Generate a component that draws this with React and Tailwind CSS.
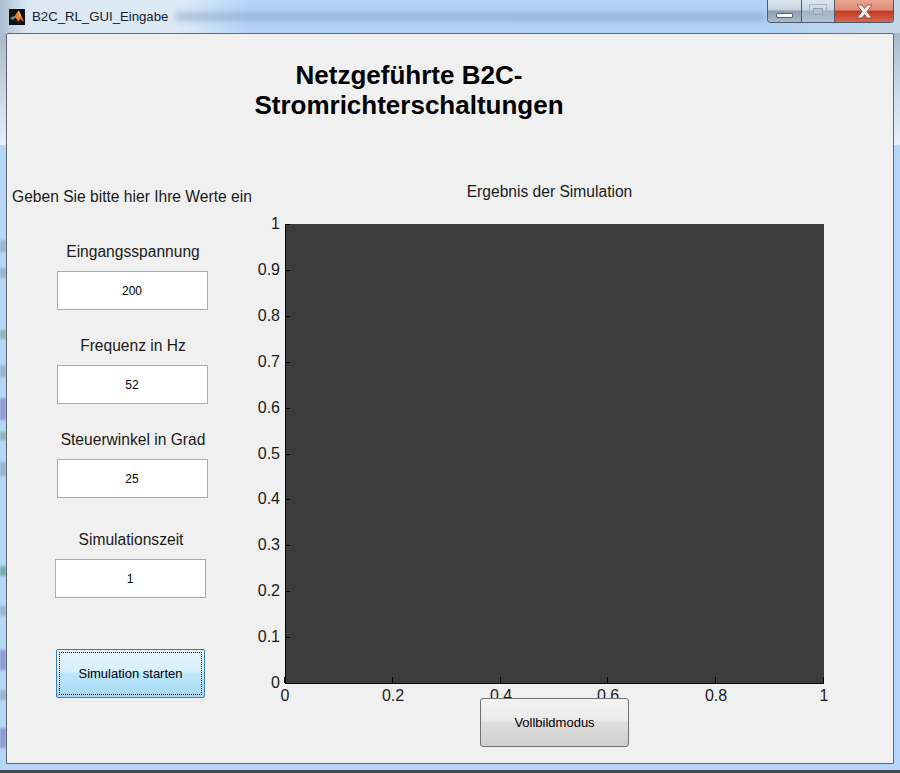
const yTicks = ["1", "0.9", "0.8", "0.7", "0.6", "0.5", "0.4", "0.3", "0.2", "0.1", "0"];
const xTicks = ["0", "0.2", "0.4", "0.6", "0.8", "1"];

// plot box inside the svg
const plotX = 33;
const plotY = 10;
const plotW = 539;
const plotH = 459;

// blurred desktop showing through the left window edge
const smudges = [
  { y: 240, h: 12, color: "#8fa7bd" },
  { y: 268, h: 10, color: "#8fa7bd" },
  { y: 330, h: 9, color: "#7fa59d" },
  { y: 365, h: 12, color: "#8fa7bd" },
  { y: 398, h: 22, color: "#7d80c4" },
  { y: 432, h: 8, color: "#7fa59d" },
  { y: 462, h: 14, color: "#8fa7bd" },
  { y: 566, h: 10, color: "#5f9a8c" },
  { y: 606, h: 10, color: "#8fa7bd" },
  { y: 650, h: 20, color: "#7d80c4" },
  { y: 690, h: 10, color: "#8fa7bd" },
  { y: 728, h: 20, color: "#7d80c4" },
];

const Field = ({ label, value, className }) => (
  <div className={`flex flex-col items-center ${className}`}>
    <div className="mt-[1px] pl-[2px] h-[22px] text-[15.6px] leading-[22px] text-[#1a1a1a] whitespace-nowrap">{label}</div>
    <div className="mt-[8px] w-[151px] h-[39px] bg-white border border-[#ababab] flex items-center justify-center text-[12px] text-black">
      {value}
    </div>
  </div>
);

const Chart = () => (
  <svg width="600" height="499" className="block" style={{ fontFamily: '"Liberation Sans", Arial, sans-serif' }}>
    <rect x={plotX} y={plotY} width={plotW} height={plotH} fill="#3c3c3c" />
    <path d={`M${plotX + 0.5} ${plotY}V${plotY + plotH + 0.5}H${plotX + plotW}`} fill="none" stroke="#000" />
    {yTicks.map((t, i) => {
      const y = Math.round(plotY + (plotH * i) / 10);
      return (
        <g key={t}>
          <path d={`M${plotX} ${y + 0.5}h5`} stroke="#000" />
          <text x={plotX - 5} y={y + 5} textAnchor="end" fontSize="16" fill="#1a1a1a">{t}</text>
        </g>
      );
    })}
    {xTicks.map((t, i) => {
      const x = Math.round(plotX + (plotW * i) / 5);
      return (
        <g key={t}>
          <path d={`M${x - 0.5} ${plotY + plotH}v-6`} stroke="#000" />
          <text x={x} y={plotY + plotH + 18} textAnchor="middle" fontSize="16" fill="#1a1a1a">{t}</text>
        </g>
      );
    })}
  </svg>
);

const WindowButtons = () => (
  <div className="flex h-[23px] w-[127px] rounded-b-[4px] border border-t-0 border-[#4d5a68] overflow-hidden">
    <div className="w-[34px] border-r border-[#4d5a68] bg-[linear-gradient(#dbe5ee_0%,#c6d3e0_45%,#8c9fb3_50%,#a9bccd_100%)] flex items-end justify-center pb-[4px]">
      <div className="w-[17px] h-[5px] bg-white border border-[#53606d] rounded-[1px]"></div>
    </div>
    <div className="w-[33px] border-r border-[#4d5a68] bg-[linear-gradient(#dbe5ee_0%,#c9d6e2_45%,#a0b2c4_50%,#b4c5d4_100%)] flex items-center justify-center">
      <div className="w-[18px] h-[14px] border border-[#a9b6c2] flex items-center justify-center">
        <div className="w-[10px] h-[7px] bg-[#b5c2ce] border border-[#93a1ad]"></div>
      </div>
    </div>
    <div className="flex-1 bg-[linear-gradient(#eba592_0%,#de8a75_45%,#c23b22_52%,#d6684f_100%)] flex items-center justify-center">
      <svg width="17" height="15" viewBox="0 0 17 15">
        <path d="M1 1h5l2.5 3.5L11 1h5l-5 6.500 5 6.500h-5L8.500 10.500 6 14H1l5-6.500z" fill="#f4f0ee" stroke="#6d4a44" strokeWidth="0.8" />
      </svg>
    </div>
  </div>
);

const MatlabIcon = () => (
  <svg width="16" height="16" viewBox="0 0 16 16" className="block">
    <rect width="16" height="16" fill="#111" />
    <path d="M1 9l4-2 2 1-3 3z" fill="#3f9ac0" />
    <path d="M5 8l4-6c1-1 2 1 3 4l3 7c-2-1-3-3-4-3l-2 3c-1-3-2-4-4-5z" fill="#e8792a" />
    <path d="M9 3c1-1 2 1 3 4l-2 1z" fill="#f4b04a" />
  </svg>
);

const App = () => {
  return (
    <div
      className="relative w-[900px] h-[773px] overflow-hidden bg-[#b5d6f6]"
      style={{ fontFamily: '"Liberation Sans", Arial, sans-serif' }}
    >
      {/* frame decoration: glass tint and what shines through it */}
      <div className="absolute left-0 top-0 w-full h-[33px] bg-[linear-gradient(90deg,#a9bfd2_0%,#dbe8f3_3%,#dceaf6_20%,#b2d3f5_28%,#b0d2f4_85%,#c5d8e8_100%)]"></div>
      <div className="absolute left-[175px] top-[12px] w-[590px] h-[9px] bg-[#7f9cc0] opacity-50 blur-[3px]"></div>
      <div className="absolute left-0 top-[33px] w-[6px] h-[112px] bg-[linear-gradient(#a9b9c8,#c3d0dc_40%,#e6eff7)]"></div>
      <div className="absolute right-0 top-[33px] w-[6px] h-[112px] bg-[linear-gradient(#a9b9c8,#c3d5e4_40%,#e6f0fa)]"></div>
      {smudges.map((s) => (
        <div
          key={s.y}
          className="absolute left-0 w-[6px] blur-[1px] opacity-70"
          style={{ top: s.y, height: s.h, backgroundColor: s.color }}
        ></div>
      ))}

      <div className="relative h-[33px] flex items-start">
        <div className="ml-[9px] mt-[9px]"><MatlabIcon /></div>
        <div className="ml-[7px] mt-[8px] text-[13.2px] leading-[17px] text-[#14202c]">B2C_RL_GUI_Eingabe</div>
        <div className="ml-auto mr-[6px]"><WindowButtons /></div>
      </div>

      <div className="relative ml-[6px] w-[888px] h-[731px] bg-[#f0f0f0] border border-[#5c6b7a] rounded-t-[2px]">
        <h1 className="mt-[26px] ml-[242px] w-[320px] text-center text-[26px] leading-[30px] font-bold text-black">
          Netzgeführte B2C-<br />Stromrichterschaltungen
        </h1>

        <div className="mt-[65px] flex items-start">
          <div className="w-[270px] shrink-0">
            <div className="mt-[1px] ml-[5px] h-[21px] text-[15.6px] leading-[22px] text-[#1a1a1a] whitespace-nowrap">
              Geben Sie bitte hier Ihre Werte ein
            </div>
            <div className="w-[250px]">
              <Field className="mt-[33px]" label="Eingangsspannung" value="200" />
              <Field className="mt-[24px]" label="Frequenz in Hz" value="52" />
              <Field className="mt-[24px]" label="Steuerwinkel in Grad" value="25" />
              <Field className="mt-[30px] -ml-[4px]" label="Simulationszeit" value="1" />
            </div>
            <button className="mt-[51px] ml-[49px] w-[149px] h-[49px] rounded-[2px] border border-[#3c7fb1] p-[2px] bg-[linear-gradient(#e6f5fd_0%,#d9f0fc_45%,#bde6fd_50%,#a7d9f5_100%)]">
              <span className="flex items-center justify-center w-full h-full border border-dotted border-black text-[13px] text-black">
                Simulation starten
              </span>
            </button>
          </div>

          <div className="-ml-[25px] -mt-[4px]">
            <div className="ml-[28px] w-[539px] h-[22px] text-center text-[15.6px] leading-[22px] text-[#1a1a1a]">
              Ergebnis der Simulation
            </div>
            <div className="mt-[11px]"><Chart /></div>
          </div>
        </div>

        <button className="absolute left-[473px] top-[664px] w-[149px] h-[49px] rounded-[3px] border border-[#707070] bg-[linear-gradient(#f2f2f2_0%,#ebebeb_45%,#dddddd_50%,#cfcfcf_100%)] text-[13px] text-black">
          Vollbildmodus
        </button>
      </div>

      <div className="absolute left-0 right-0 bottom-0 h-[3px] bg-[#3f4650]"></div>
    </div>
  );
};

export default App;
